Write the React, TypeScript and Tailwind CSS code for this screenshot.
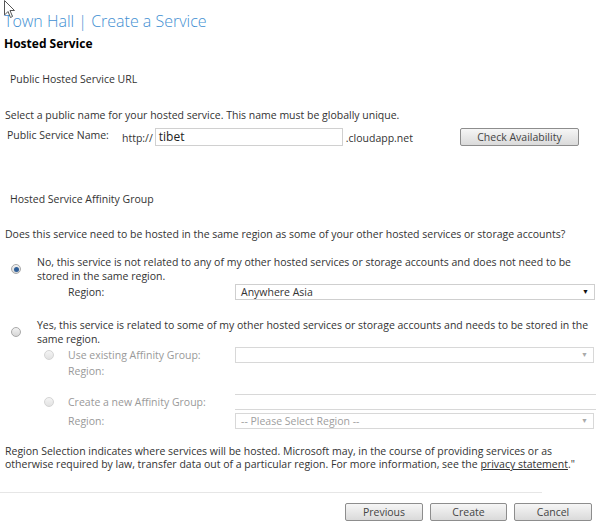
import React from 'react';

// Small radio drawn with css, matches the old IE/Win7 look
function Radio({ checked = false, disabled = false }: { checked?: boolean; disabled?: boolean }) {
  return (
    <span
      className={`flex h-[10px] w-[10px] shrink-0 items-center justify-center rounded-full border ${
        disabled ? 'border-[#d4d4d4] bg-gradient-to-b from-[#f4f4f4] to-[#e2e2e2]' : 'border-[#a9a9a9] bg-gradient-to-b from-[#f2f2f2] to-[#d6d6d6]'
      }`}
    >
      {checked && <span className="h-[5px] w-[5px] rounded-full bg-[#2f5f99]" />}
    </span>
  );
}

function Select({ value, disabled = false, className = '' }: { value?: string; disabled?: boolean; className?: string }) {
  return (
    <div
      className={`flex h-[16px] items-center justify-between border bg-white pl-[5px] pr-[5px] ${
        disabled ? 'border-[#d8d8d8] text-[#a0a0a0]' : 'border-[#cfcfcf] text-[#333]'
      } ${className}`}
    >
      <span>{value}</span>
      <span className={`text-[7px] ${disabled ? 'text-[#aaa]' : 'text-[#111]'}`}>▼</span>
    </div>
  );
}

function Button({ label, className = '' }: { label: string; className?: string }) {
  return (
    <button
      className={`flex h-[18px] items-center justify-center rounded-[2px] border border-[#8d8d8d] bg-gradient-to-b from-[#f6f6f6] to-[#dadada] text-[10.5px] text-[#444] ${className}`}
    >
      {label}
    </button>
  );
}

export default function App() {
  return (
    <div className="relative h-[526px] w-[600px] overflow-hidden bg-white font-['Open_Sans',sans-serif] text-[10.5px] leading-[14px] text-[#333]">
      {/* mouse pointer */}
      <svg className="absolute left-[4px] top-0" width="12" height="19" viewBox="0 0 12 19">
        <path d="M0.5 0.5 L0.5 15 L4 11.5 L6.5 17.5 L8.5 16.5 L6 10.5 L10.5 10.5 Z" fill="white" stroke="#555" strokeWidth="1" />
      </svg>

      <div className="px-[4px]">
        <div className="mt-[9px] flex h-[24px] items-center text-[16px] font-light text-[#3f8fd2]">
          Town Hall | Create a Service
        </div>
        <div className="mt-[3px] flex h-[16px] items-center text-[12px] font-bold text-black">Hosted Service</div>

        <div className="mt-[20px] flex h-[14px] items-center pl-[6px]">Public Hosted Service URL</div>

        <div className="mt-[22px] flex h-[14px] items-center pl-[1px]">
          Select a public name for your hosted service. This name must be globally unique.
        </div>

        <div className="mt-[6px] flex h-[19px] items-start">
          <span className="ml-[3px] w-[115px]">Public Service Name:</span>
          <span className="mt-[3px]">http://</span>
          <div className="ml-[2px] flex h-[18px] w-[188px] items-center border border-[#d0d0d0] pl-[3px] text-[12px] text-[#222]">
            tibet
          </div>
          <span className="ml-[3px] mt-[3px]">.cloudapp.net</span>
          <Button label="Check Availability" className="ml-[47px] w-[119px]" />
        </div>

        <div className="mt-[45px] flex h-[14px] items-center pl-[6px]">Hosted Service Affinity Group</div>

        <div className="mt-[21px] flex h-[14px] items-center pl-[1px]">
          Does this service need to be hosted in the same region as some of your other hosted services or storage accounts?
        </div>

        {/* option: not related */}
        <div className="mt-[14px] flex items-center">
          <div className="ml-[7px] w-[26px]">
            <Radio checked />
          </div>
          <div className="w-[545px]">
            No, this service is not related to any of my other hosted services or storage accounts and does not need to be stored in the same region.
          </div>
        </div>
        <div className="mt-[1px] flex items-center">
          <span className="ml-[64px] w-[167px]">Region:</span>
          <Select value="Anywhere Asia" className="w-[360px]" />
        </div>

        {/* option: related */}
        <div className="mt-[18px] flex items-center">
          <div className="ml-[7px] w-[26px]">
            <Radio />
          </div>
          <div className="w-[562px]">
            Yes, this service is related to some of my other hosted services or storage accounts and needs to be stored in the same region.
          </div>
        </div>

        <div className="mt-[1px] flex items-center text-[#999]">
          <div className="ml-[40px] w-[24px]">
            <Radio disabled />
          </div>
          <span className="w-[167px]">Use existing Affinity Group:</span>
          <Select disabled className="w-[359px]" />
        </div>
        <div className="mt-[1px] flex h-[14px] items-center pl-[64px] text-[#999]">Region:</div>

        <div className="mt-[16px] flex items-center text-[#999]">
          <div className="ml-[40px] w-[24px]">
            <Radio disabled />
          </div>
          <span className="w-[167px]">Create a new Affinity Group:</span>
          <div className="h-[16px] w-[361px] border-y border-[#d8d8d8] bg-white" />
        </div>
        <div className="mt-[3px] flex items-center text-[#999]">
          <span className="ml-[64px] w-[167px]">Region:</span>
          <Select value="-- Please Select Region --" disabled className="w-[359px]" />
        </div>

        <div className="mt-[16px] w-[592px] pl-[1px] leading-[13px]">
          Region Selection indicates where services will be hosted. Microsoft may, in the course of providing services or as
          <br />
          otherwise required by law, transfer data out of a particular region. For more information, see the{' '}
          <span className="underline">privacy statement</span>."
        </div>

        <div className="-ml-[4px] mt-[21px] w-[542px] border-t border-[#e6e6e6]" />

        <div className="mt-[10px] flex justify-end gap-[7px] pr-[4px]">
          <Button label="Previous" className="w-[78px]" />
          <Button label="Create" className="w-[77px]" />
          <Button label="Cancel" className="w-[78px]" />
        </div>
      </div>
    </div>
  );
}
